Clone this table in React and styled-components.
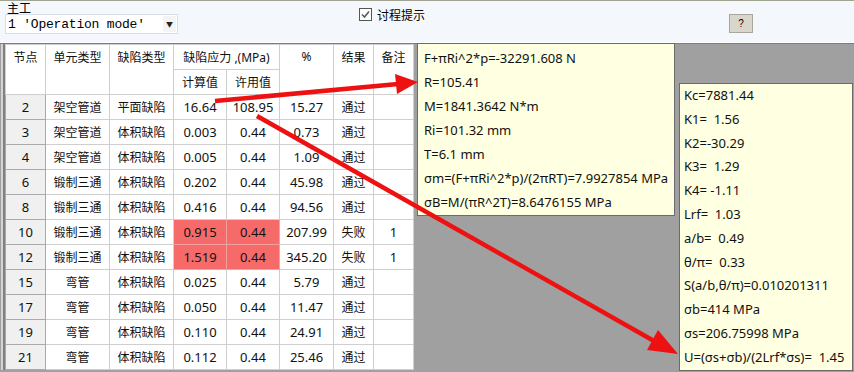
import React from 'react';
import styled, { createGlobalStyle } from 'styled-components';

const GlobalStyle = createGlobalStyle`
  html, body {
    margin: 0;
    padding: 0;
    width: 854px;
    height: 372px;
    overflow: hidden;
    background: #a0a0a0;
  }
  body {
    font-family: "Noto Sans", "Noto Sans CJK SC", sans-serif;
  }
`;

const Page = styled.div`
  position: relative;
  width: 854px;
  height: 372px;
  display: flex;
  flex-direction: column;
  background: #a0a0a0;
`;

const Toolbar = styled.div`
  height: 41px;
  flex: none;
  display: flex;
  align-items: flex-start;
  background: #f4f7fc;
  border-top: 1px solid #a3a391;
  border-bottom: 1px solid #ffffff;
  box-shadow: 0 1px 0 #7c7c7c;
`;

const ModeGroup = styled.div`
  width: 354px;
  padding-left: 5px;
  display: flex;
  flex-direction: column;
`;

const GroupLabel = styled.div`
  font-family: "Noto Sans CJK SC", sans-serif;
  font-size: 12px;
  line-height: 13px;
  height: 13px;
  padding-left: 2px;
  color: #000;
`;

const Combo = styled.div`
  width: 171px;
  height: 18px;
  display: flex;
  align-items: center;
  background: #fff;
  border: 1px solid #d8dde6;
`;

const ComboText = styled.span`
  flex: 1;
  padding-left: 2px;
  font-family: "Liberation Mono", monospace;
  font-size: 13px;
  letter-spacing: -0.2px;
  color: #000;
  white-space: pre;
`;

const ComboArrow = styled.span`
  width: 13px;
  height: 16px;
  margin-right: 1px;
  display: flex;
  align-items: center;
  justify-content: center;
  background: #f4f4f4;
  font-size: 7px;
  color: #222;
`;

const CheckRow = styled.label`
  display: flex;
  align-items: center;
  gap: 5px;
  margin-top: 5px;
  width: 370px;
  font-family: "Noto Sans CJK SC", sans-serif;
  font-size: 12px;
  color: #000;
`;

const CheckBox = styled.span`
  width: 11px;
  height: 11px;
  border: 1px solid #555;
  background: #fff;
  display: flex;
  align-items: center;
  justify-content: center;
`;

const HelpButton = styled.button`
  width: 24px;
  height: 19px;
  margin-top: 13px;
  padding: 0;
  background: #d9d7cc;
  border: 1px solid #a8a79c;
  font-family: "Liberation Sans", sans-serif;
  font-size: 10px;
  color: #000;
`;

const Main = styled.div`
  flex: 1;
  display: flex;
  padding-top: 1px;
  overflow: hidden;
`;

const GridPanel = styled.div`
  margin-left: 1px;
  border-left: 4px ridge #d4d4d4;
  background: #fff;
  align-self: flex-start;
`;

const Grid = styled.table`
  border-collapse: collapse;
  table-layout: fixed;
  font-size: 13px;
  color: #111;
`;

const Cell = styled.td`
  height: 24px;
  padding: 0;
  text-align: center;
  white-space: nowrap;
  border: 1px solid #cfcfcf;
  font-size: ${(p) => (p.$cjk ? '12px' : '13px')};
  background: ${(p) => (p.$fail ? '#f66a6a' : p.$fixed ? '#f0f0f0' : '#fff')};
  border-color: ${(p) => (p.$fixed ? '#a9a9a9' : p.$fail ? '#f2a0a0' : '#cfcfcf')};
  font-family: "Noto Sans", "Noto Sans CJK SC", sans-serif;
`;

const HeadCell = styled.th`
  height: 24px;
  padding: 0;
  font-weight: normal;
  font-size: 12px;
  text-align: center;
  vertical-align: ${(p) => (p.$top ? 'top' : 'middle')};
  padding-top: ${(p) => (p.$top ? '3px' : '0')};
  white-space: nowrap;
  border: 1px solid #cfcfcf;
  background: #fff;
  color: #111;
  font-family: "Noto Sans", "Noto Sans CJK SC", sans-serif;
`;

const Popup = styled.div`
  position: absolute;
  left: ${(p) => p.$x}px;
  top: ${(p) => p.$y}px;
  width: ${(p) => p.$w}px;
  padding: ${(p) => p.$pad};
  box-sizing: border-box;
  background: #ffffe1;
  border: 1px solid #6b6b6b;
  font-family: "Noto Sans", "Noto Sans CJK SC", sans-serif;
  font-size: 13px;
  color: #111;
`;

const PopupLine = styled.div`
  height: ${(p) => p.$h}px;
  line-height: ${(p) => p.$h}px;
  white-space: pre;
`;

const Arrows = styled.svg`
  position: absolute;
  left: 0;
  top: 0;
  pointer-events: none;
`;

const widths = [40, 64, 64, 53, 53, 54, 40, 40];
const cjkCols = [1, 2, 6];

const rows = [
  ['2', '架空管道', '平面缺陷', '16.64', '108.95', '15.27', '通过', ''],
  ['3', '架空管道', '体积缺陷', '0.003', '0.44', '0.73', '通过', ''],
  ['4', '架空管道', '体积缺陷', '0.005', '0.44', '1.09', '通过', ''],
  ['6', '锻制三通', '体积缺陷', '0.202', '0.44', '45.98', '通过', ''],
  ['8', '锻制三通', '体积缺陷', '0.416', '0.44', '94.56', '通过', ''],
  ['10', '锻制三通', '体积缺陷', '0.915', '0.44', '207.99', '失败', '1'],
  ['12', '锻制三通', '体积缺陷', '1.519', '0.44', '345.20', '失败', '1'],
  ['15', '弯管', '体积缺陷', '0.025', '0.44', '5.79', '通过', ''],
  ['17', '弯管', '体积缺陷', '0.050', '0.44', '11.47', '通过', ''],
  ['19', '弯管', '体积缺陷', '0.110', '0.44', '24.91', '通过', ''],
  ['21', '弯管', '体积缺陷', '0.112', '0.44', '25.46', '通过', ''],
];

const stressLines = [
  'F+πRi^2*p=-32291.608 N',
  'R=105.41',
  'M=1841.3642 N*m',
  'Ri=101.32 mm',
  'T=6.1 mm',
  'σm=(F+πRi^2*p)/(2πRT)=7.9927854 MPa',
  'σB=M/(πR^2T)=8.6476155 MPa',
];

const fractureLines = [
  'Kc=7881.44',
  'K1=  1.56',
  'K2=-30.29',
  'K3=  1.29',
  'K4= -1.11',
  'Lrf=  1.03',
  'a/b=  0.49',
  'θ/π=  0.33',
  'S(a/b,θ/π)=0.010201311',
  'σb=414 MPa',
  'σs=206.75998 MPa',
  'U=(σs+σb)/(2Lrf*σs)=  1.45',
];

const DefectGrid = () => (
  <Grid>
    <colgroup>
      {widths.map((w, i) => (
        <col key={i} style={{ width: w }} />
      ))}
    </colgroup>
    <thead>
      <tr>
        <HeadCell rowSpan={2} $top>节点</HeadCell>
        <HeadCell rowSpan={2} $top>单元类型</HeadCell>
        <HeadCell rowSpan={2} $top>缺陷类型</HeadCell>
        <HeadCell colSpan={2}>缺陷应力 ,(MPa)</HeadCell>
        <HeadCell rowSpan={2} $top>%</HeadCell>
        <HeadCell rowSpan={2} $top>结果</HeadCell>
        <HeadCell rowSpan={2} $top>备注</HeadCell>
      </tr>
      <tr>
        <HeadCell>计算值</HeadCell>
        <HeadCell>许用值</HeadCell>
      </tr>
    </thead>
    <tbody>
      {rows.map((r) => {
        const fail = r[6] === '失败';
        return (
          <tr key={r[0]}>
            {r.map((v, i) => (
              <Cell
                key={i}
                $fixed={i === 0}
                $cjk={cjkCols.includes(i)}
                $fail={fail && (i === 3 || i === 4)}
              >
                {v}
              </Cell>
            ))}
          </tr>
        );
      })}
    </tbody>
  </Grid>
);

const App = () => (
  <Page>
    <GlobalStyle />
    <Toolbar>
      <ModeGroup>
        <GroupLabel>主工</GroupLabel>
        <Combo>
          <ComboText>1 'Operation mode'</ComboText>
          <ComboArrow>▼</ComboArrow>
        </Combo>
      </ModeGroup>
      <CheckRow>
        <CheckBox>
          <svg width="9" height="9" viewBox="0 0 9 9">
            <path d="M1 4.5 L3.5 7 L8 1.5" fill="none" stroke="#5a5a5a" strokeWidth="1.6" />
          </svg>
        </CheckBox>
        讨程提示
      </CheckRow>
      <HelpButton>?</HelpButton>
    </Toolbar>
    <Main>
      <GridPanel>
        <DefectGrid />
      </GridPanel>
    </Main>

    <Popup $x={417} $y={43} $w={258} $pad="2px 6px 1px">
      {stressLines.map((l) => (
        <PopupLine key={l} $h={24}>{l}</PopupLine>
      ))}
    </Popup>
    <Popup $x={679} $y={83} $w={174} $pad="0 4px">
      {fractureLines.map((l) => (
        <PopupLine key={l} $h={23.8}>{l}</PopupLine>
      ))}
    </Popup>

    <Arrows width="854" height="372" viewBox="0 0 854 372">
      <g fill="#ee1111" stroke="#ee1111">
        <line x1="215" y1="101" x2="398" y2="84" strokeWidth="4.5" />
        <polygon points="418,82 397,94 395,74" stroke="none" />
        <line x1="257" y1="116" x2="654" y2="341" strokeWidth="4.5" />
        <polygon points="678,354 647,350 658,330" stroke="none" />
      </g>
    </Arrows>
  </Page>
);

export default App;
